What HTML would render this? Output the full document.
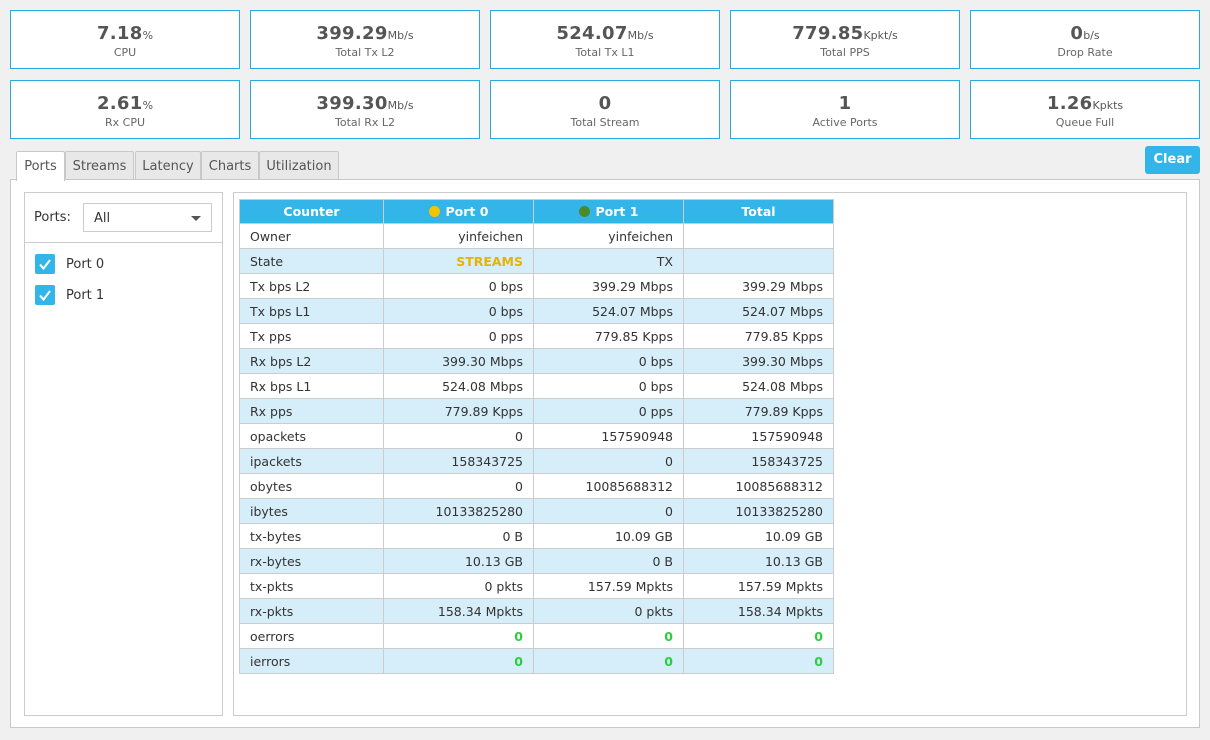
<!DOCTYPE html>
<html><head><meta charset="utf-8"><style>
*{box-sizing:border-box;margin:0;padding:0}
body{width:1210px;height:740px;background:#f0f0f0;font-family:"DejaVu Sans","Liberation Sans",sans-serif;color:#333;position:relative;overflow:hidden;font-size:12.5px}
.card{position:absolute;width:230px;height:59px;background:#fff;border:1px solid #29abe2;text-align:center;color:#555}
.card .v{position:absolute;top:12px;left:0;right:0;font-weight:bold;font-size:18px;letter-spacing:0.3px}
.card .v span{font-weight:normal;font-size:11px;letter-spacing:0}
.card .l{position:absolute;top:35px;left:0;right:0;font-size:11px;color:#666}
.tab{position:absolute;top:151px;height:29px;border:1px solid #c8c8c8;border-bottom:none;background:#e8e8e8;color:#555;font-size:13px;text-align:center;line-height:30px;border-radius:2px 2px 0 0}
.tab.a{background:#fff;color:#555;height:30px;z-index:2}
.panel{position:absolute;left:10px;top:179px;width:1190px;height:549px;background:#fff;border:1px solid #c8c8c8}
.box{position:absolute;border:1px solid #ccc;background:#fff}
table{position:absolute;left:239px;top:199px;border-collapse:collapse;font-size:12.5px;table-layout:fixed;width:594px}
td,th{border:1px solid #ccc;height:25px;padding:0 10px;text-align:right;color:#333;font-weight:normal}
th{background:#33b5e9;color:#fff;font-weight:bold;text-align:center;border-color:#ccc;height:24px}
td:first-child{text-align:left}
tr:nth-child(odd) td{background:#d6eefa}
.g{color:#2ecc40;font-weight:bold}
.y{color:#e6b400;font-weight:bold}
.dot{display:inline-block;width:11px;height:11px;border-radius:50%;vertical-align:-1px;margin-right:6px}
.cb{position:absolute;left:35px;width:20px;height:20px;background:#33b5e9;border-radius:2px}
</style></head><body>
<div class="card" style="left:10px;top:10px"><div class="v">7.18<span>%</span></div><div class="l">CPU</div></div>
<div class="card" style="left:250px;top:10px"><div class="v">399.29<span>Mb/s</span></div><div class="l">Total Tx L2</div></div>
<div class="card" style="left:490px;top:10px"><div class="v">524.07<span>Mb/s</span></div><div class="l">Total Tx L1</div></div>
<div class="card" style="left:730px;top:10px"><div class="v">779.85<span>Kpkt/s</span></div><div class="l">Total PPS</div></div>
<div class="card" style="left:970px;top:10px"><div class="v">0<span>b/s</span></div><div class="l">Drop Rate</div></div>
<div class="card" style="left:10px;top:80px"><div class="v">2.61<span>%</span></div><div class="l">Rx CPU</div></div>
<div class="card" style="left:250px;top:80px"><div class="v">399.30<span>Mb/s</span></div><div class="l">Total Rx L2</div></div>
<div class="card" style="left:490px;top:80px"><div class="v">0</div><div class="l">Total Stream</div></div>
<div class="card" style="left:730px;top:80px"><div class="v">1</div><div class="l">Active Ports</div></div>
<div class="card" style="left:970px;top:80px"><div class="v">1.26<span>Kpkts</span></div><div class="l">Queue Full</div></div>

<div class="tab a" style="left:16px;width:49px">Ports</div>
<div class="tab" style="left:65px;width:69px">Streams</div>
<div class="tab" style="left:135px;width:66px">Latency</div>
<div class="tab" style="left:201px;width:58px">Charts</div>
<div class="tab" style="left:259px;width:80px">Utilization</div>
<div style="position:absolute;left:1145px;top:146px;width:55px;height:28px;background:#33b5e9;border-radius:3px;color:#fff;font-weight:bold;font-size:13px;text-align:center;line-height:27px">Clear</div>

<div class="panel"></div>
<div class="box" style="left:24px;top:192px;width:199px;height:524px"></div>
<div style="position:absolute;left:34px;top:210px;font-size:13px">Ports:</div>
<div style="position:absolute;left:83px;top:203px;width:129px;height:29px;border:1px solid #ccc;padding-left:10px;line-height:29px;font-size:13px">All<span style="position:absolute;right:10px;top:12px;width:0;height:0;border-left:5px solid transparent;border-right:5px solid transparent;border-top:5px solid #555"></span></div>
<div style="position:absolute;left:25px;top:242px;width:197px;border-top:1px solid #ccc"></div>
<div class="cb" style="top:254px"><svg width="20" height="20"><path d="M5 10.5l3.5 4L15 6" stroke="#fff" stroke-width="2" fill="none"/></svg></div>
<div style="position:absolute;left:66px;top:257px;font-size:13px">Port 0</div>
<div class="cb" style="top:285px"><svg width="20" height="20"><path d="M5 10.5l3.5 4L15 6" stroke="#fff" stroke-width="2" fill="none"/></svg></div>
<div style="position:absolute;left:66px;top:288px;font-size:13px">Port 1</div>

<div class="box" style="left:233px;top:192px;width:954px;height:524px"></div>
<table>
<colgroup><col style="width:144px"><col style="width:150px"><col style="width:150px"><col style="width:150px"></colgroup>
<tr><th>Counter</th><th><span class="dot" style="background:#f5c400"></span>Port 0</th><th><span class="dot" style="background:#4a8a2a"></span>Port 1</th><th>Total</th></tr>
<tr><td>Owner</td><td>yinfeichen</td><td>yinfeichen</td><td></td></tr>
<tr><td>State</td><td class="y">STREAMS</td><td>TX</td><td></td></tr>
<tr><td>Tx bps L2</td><td>0 bps</td><td>399.29 Mbps</td><td>399.29 Mbps</td></tr>
<tr><td>Tx bps L1</td><td>0 bps</td><td>524.07 Mbps</td><td>524.07 Mbps</td></tr>
<tr><td>Tx pps</td><td>0 pps</td><td>779.85 Kpps</td><td>779.85 Kpps</td></tr>
<tr><td>Rx bps L2</td><td>399.30 Mbps</td><td>0 bps</td><td>399.30 Mbps</td></tr>
<tr><td>Rx bps L1</td><td>524.08 Mbps</td><td>0 bps</td><td>524.08 Mbps</td></tr>
<tr><td>Rx pps</td><td>779.89 Kpps</td><td>0 pps</td><td>779.89 Kpps</td></tr>
<tr><td>opackets</td><td>0</td><td>157590948</td><td>157590948</td></tr>
<tr><td>ipackets</td><td>158343725</td><td>0</td><td>158343725</td></tr>
<tr><td>obytes</td><td>0</td><td>10085688312</td><td>10085688312</td></tr>
<tr><td>ibytes</td><td>10133825280</td><td>0</td><td>10133825280</td></tr>
<tr><td>tx-bytes</td><td>0 B</td><td>10.09 GB</td><td>10.09 GB</td></tr>
<tr><td>rx-bytes</td><td>10.13 GB</td><td>0 B</td><td>10.13 GB</td></tr>
<tr><td>tx-pkts</td><td>0 pkts</td><td>157.59 Mpkts</td><td>157.59 Mpkts</td></tr>
<tr><td>rx-pkts</td><td>158.34 Mpkts</td><td>0 pkts</td><td>158.34 Mpkts</td></tr>
<tr><td>oerrors</td><td class="g">0</td><td class="g">0</td><td class="g">0</td></tr>
<tr><td>ierrors</td><td class="g">0</td><td class="g">0</td><td class="g">0</td></tr>
</table>
</body></html>
